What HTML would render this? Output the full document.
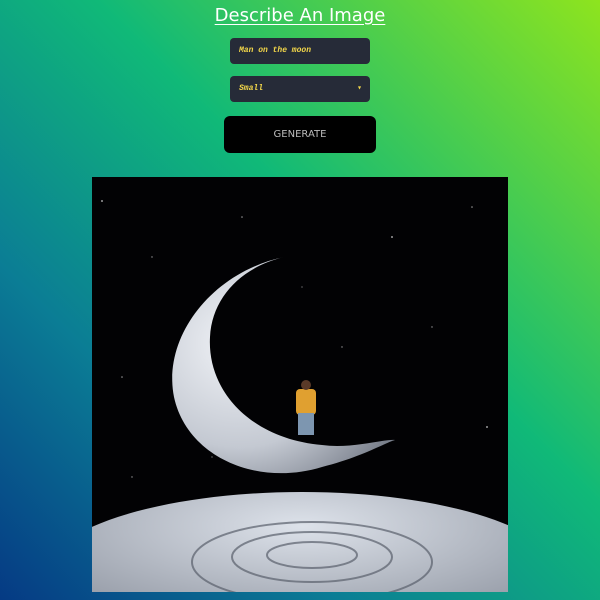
<!DOCTYPE html>
<html><head><style>
html,body{margin:0;padding:0;width:600px;height:600px;overflow:hidden}
body{background:linear-gradient(to top right,#053a84 0%,#0b7d95 28%,#10b978 58%,#8ee41e 100%);font-family:"DejaVu Sans",sans-serif;position:relative}
h1{position:absolute;top:5px;left:0;width:600px;text-align:center;margin:0;font-weight:normal;font-size:18px;color:#fff;text-decoration:underline;text-underline-offset:3px}
.f{position:absolute;left:230px;width:140px;height:26px;background:#262b38;border-radius:4px;color:#f4d84a;font-family:"Liberation Mono",monospace;font-style:italic;font-weight:bold;font-size:8px;line-height:26px;padding-left:9px;box-sizing:border-box}
.btn{position:absolute;left:224px;top:116px;width:152px;height:37px;background:#000;border-radius:6px;color:#bbb;font-size:10px;text-align:center;line-height:37px}
.img{position:absolute;left:92px;top:177px;width:416px;height:415px;background:#020204;overflow:hidden}
</style></head><body>
<h1>Describe An Image</h1>
<div class="f" style="top:38px">Man on the moon</div>
<div class="f" style="top:76px">Small<span style="position:absolute;right:8px;font-style:normal">▾</span></div>
<div class="btn">GENERATE</div>
<div class="img">
<svg width="416" height="415" viewBox="0 0 416 415" style="display:block">
<defs>
<radialGradient id="m" cx="0.3" cy="0.4" r="0.8"><stop offset="0" stop-color="#f2f4f8"/><stop offset="0.6" stop-color="#c4c9d2"/><stop offset="1" stop-color="#7a808c"/></radialGradient>
<radialGradient id="p" cx="0.5" cy="0.2" r="0.7"><stop offset="0" stop-color="#dde2ea"/><stop offset="1" stop-color="#8a909c"/></radialGradient>
</defs>
<g fill="#fff" opacity="0.6"><circle cx="10" cy="24" r="1"/><circle cx="60" cy="80" r=".7"/><circle cx="150" cy="40" r=".8"/><circle cx="300" cy="60" r="1"/><circle cx="380" cy="30" r=".8"/><circle cx="340" cy="150" r=".7"/><circle cx="30" cy="200" r=".8"/><circle cx="250" cy="170" r=".7"/><circle cx="395" cy="250" r="1"/><circle cx="40" cy="300" r=".7"/><circle cx="210" cy="110" r=".6"/><circle cx="120" cy="280" r=".6"/></g>
<path d="M192 80 C120 95 70 160 82 220 C95 280 165 310 230 290 C270 280 295 265 303 263 C290 262 260 272 230 268 C160 262 115 215 118 160 C120 120 150 90 192 80 Z" fill="url(#m)"/>
<ellipse cx="210" cy="400" rx="260" ry="85" fill="url(#p)"/>
<g fill="none" stroke="#5a606c" stroke-width="2" opacity="0.7"><ellipse cx="220" cy="380" rx="80" ry="25"/><ellipse cx="220" cy="378" rx="45" ry="13"/><ellipse cx="220" cy="385" rx="120" ry="40"/></g>
<rect x="204" y="212" width="20" height="26" rx="4" fill="#e0a030"/>
<circle cx="214" cy="208" r="5" fill="#5a3a28"/>
<rect x="206" y="236" width="16" height="22" fill="#7d96b0"/>
</svg>
</div>
</body></html>
